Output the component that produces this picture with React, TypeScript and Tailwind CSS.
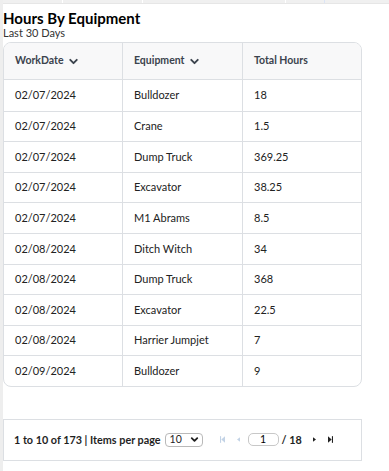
import { ChevronDown } from 'lucide-react';

const rows = [
  { date: '02/07/2024', equipment: 'Bulldozer', hours: '18' },
  { date: '02/07/2024', equipment: 'Crane', hours: '1.5' },
  { date: '02/07/2024', equipment: 'Dump Truck', hours: '369.25' },
  { date: '02/07/2024', equipment: 'Excavator', hours: '38.25' },
  { date: '02/07/2024', equipment: 'M1 Abrams', hours: '8.5' },
  { date: '02/08/2024', equipment: 'Ditch Witch', hours: '34' },
  { date: '02/08/2024', equipment: 'Dump Truck', hours: '368' },
  { date: '02/08/2024', equipment: 'Excavator', hours: '22.5' },
  { date: '02/08/2024', equipment: 'Harrier Jumpjet', hours: '7' },
  { date: '02/09/2024', equipment: 'Bulldozer', hours: '9' },
];

function FirstIcon({ className }: { className: string }) {
  return (
    <svg viewBox="0 0 6 8" className={className} fill="currentColor">
      <rect x="0" y="0" width="1.3" height="8" />
      <path d="M6 0 L1.6 4 L6 8 Z" />
    </svg>
  );
}

function LastIcon({ className }: { className: string }) {
  return (
    <svg viewBox="0 0 6 8" className={className} fill="currentColor">
      <rect x="4.7" y="0" width="1.3" height="8" />
      <path d="M0 0 L4.4 4 L0 8 Z" />
    </svg>
  );
}

function Tri({ className, dir }: { className: string; dir: 'left' | 'right' }) {
  return (
    <svg viewBox="0 0 4 6" className={className} fill="currentColor">
      {dir === 'left' ? <path d="M4 0 L0 3 L4 6 Z" /> : <path d="M0 0 L4 3 L0 6 Z" />}
    </svg>
  );
}

export default function App() {
  return (
    <div className="flex w-[389px] h-[471px] bg-white font-['Lato',sans-serif] text-[#1f1f1f] overflow-hidden">
      <div className="w-[3px] shrink-0 bg-[#eeeeee]" />
      <div className="flex-1 flex flex-col">
        <div className="h-[4px] flex bg-[#f0f0f0] border-b border-[#e6e6e6]">
          <div className="w-[60px] border-r border-white" />
          <div className="w-[80px] border-r border-white" />
          <div className="w-[143px] border-r border-white" />
          <div className="w-[39px] border-r border-[#dbe4f5]" />
        </div>

        <h1 className="mt-[5px] text-[15px] leading-[18px] font-bold text-black">Hours By Equipment</h1>
        <div className="text-[11px] leading-[12px] text-[#333]">Last 30 Days</div>

        <div className="mt-[3px] w-[359px] border border-[#dcdfe3] rounded-[8px] overflow-hidden">
          <div className="grid grid-cols-[119px_120px_1fr] h-[37px] bg-[#f8f8f9] border-b border-[#dcdfe3] text-[10.5px] font-bold text-[#3b434d]">
            <div className="flex items-center gap-[3px] pl-[11px] border-r border-[#dcdfe3]">
              WorkDate <ChevronDown size={13} strokeWidth={3.5} />
            </div>
            <div className="flex items-center gap-[3px] pl-[11px] border-r border-[#dcdfe3]">
              Equipment <ChevronDown size={13} strokeWidth={3.5} />
            </div>
            <div className="flex items-center pl-[11px]">Total Hours</div>
          </div>
          {rows.map((r, i) => (
            <div
              key={i}
              className={`grid grid-cols-[119px_120px_1fr] h-[30.6px] text-[11px] text-[#222] ${i > 0 ? 'border-t border-[#dcdfe3]' : ''}`}
            >
              <div className="flex items-center pl-[11px] border-r border-[#dcdfe3]">{r.date}</div>
              <div className="flex items-center pl-[11px] border-r border-[#dcdfe3]">{r.equipment}</div>
              <div className="flex items-center pl-[11px]">{r.hours}</div>
            </div>
          ))}
        </div>

        <div className="mt-[32px] w-[359px] h-[42px] border border-[#dcdfe3] flex items-center pl-[10px] text-[10.8px] font-bold text-[#1f1f1f]">
          <span>1 to 10 of 173 | Items per page</span>
          <div className="ml-[4px] w-[38px] h-[14px] border border-[#b9b9b9] rounded-[4px] flex items-center justify-between pl-[4px] pr-[2px] font-normal text-[10.5px]">
            <span>10</span>
            <ChevronDown size={11} strokeWidth={4} />
          </div>
          <FirstIcon className="ml-[17px] w-[5px] h-[7px] text-[#c3d3e6]" />
          <Tri dir="left" className="ml-[12px] w-[3px] h-[5px] text-[#c3d3e6]" />
          <div className="ml-[8px] w-[31px] h-[13px] border border-[#c8c8c8] rounded-[5px] flex items-center justify-center font-normal text-[10.5px] text-black">
            1
          </div>
          <span className="ml-[3px]">/ 18</span>
          <Tri dir="right" className="ml-[11px] w-[3px] h-[5px] text-[#222]" />
          <LastIcon className="ml-[12px] w-[5px] h-[7px] text-[#222]" />
        </div>
      </div>
    </div>
  );
}
